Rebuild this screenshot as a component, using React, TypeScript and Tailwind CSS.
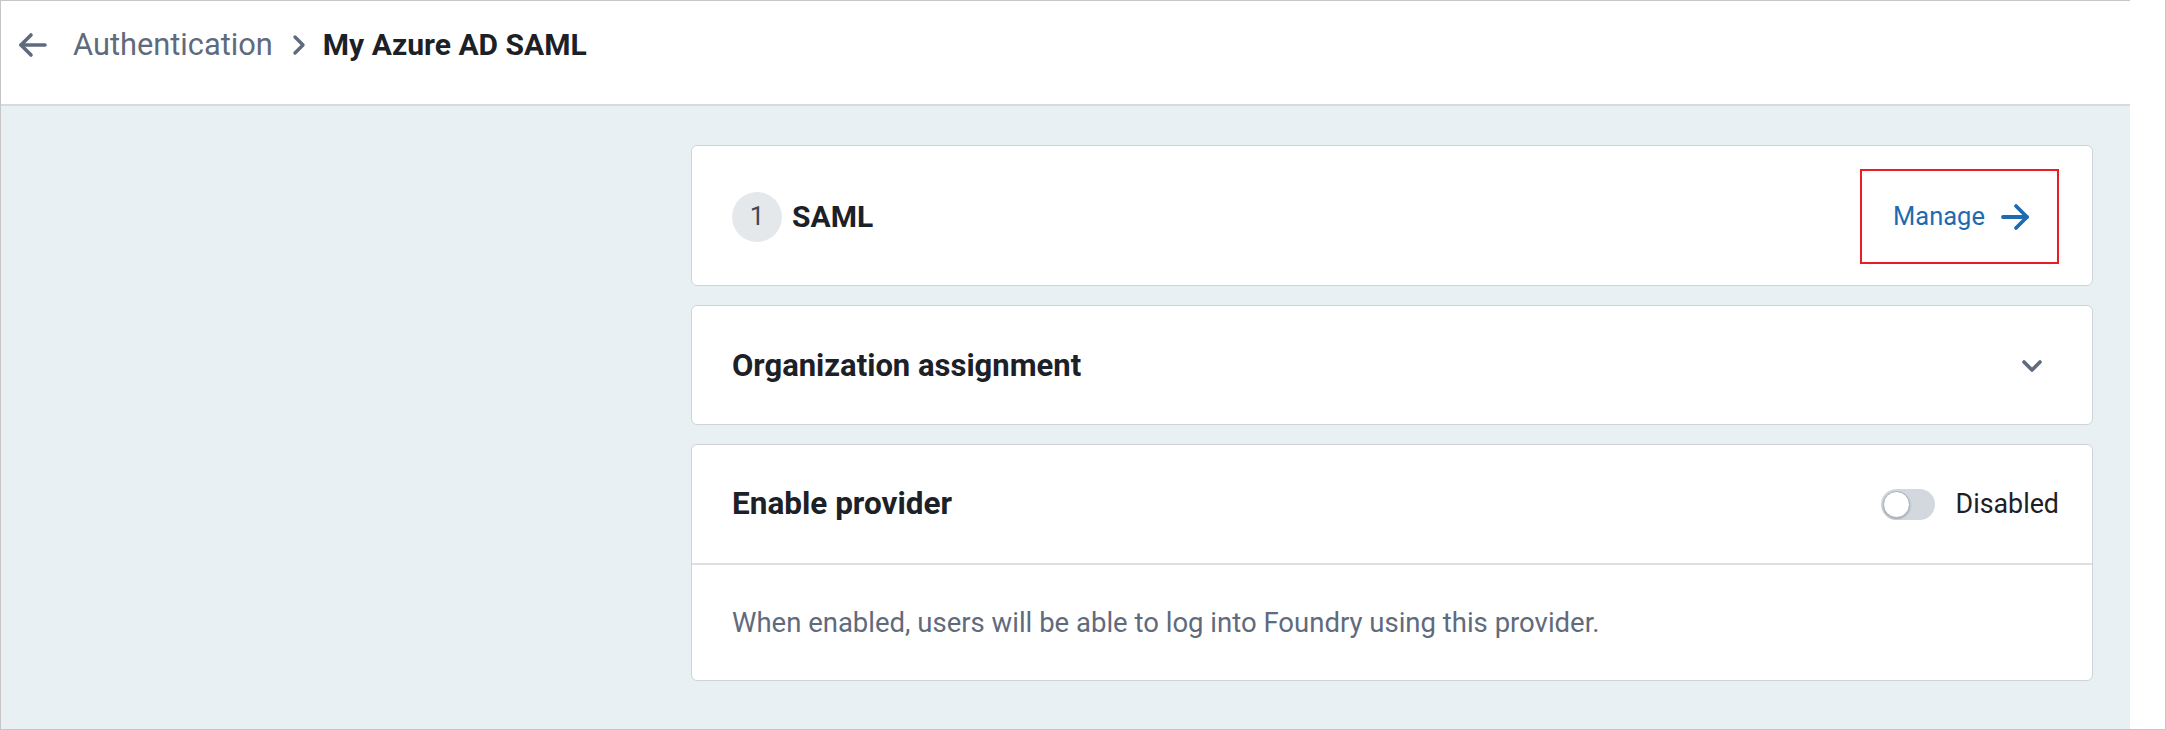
import React from "react";

function ArrowLeft() {
  return (
    <svg width="30" height="26" viewBox="0 0 30 26" fill="none" stroke="#5f6b7c" strokeWidth="3.6" strokeLinecap="round" strokeLinejoin="round">
      <path d="M27 13H3" />
      <path d="M13 3L3 13l10 10" />
    </svg>
  );
}

function ChevronRight() {
  return (
    <svg width="14" height="22" viewBox="0 0 14 22" fill="none" stroke="#5f6b7c" strokeWidth="3.4" strokeLinecap="round" strokeLinejoin="round">
      <path d="M3 3l8 8-8 8" />
    </svg>
  );
}

function ArrowRight() {
  return (
    <svg width="30" height="28" viewBox="0 0 30 28" fill="none" stroke="#1f6bb0" strokeWidth="3.8" strokeLinecap="round" strokeLinejoin="round">
      <path d="M3 14h24" />
      <path d="M16 3l11 11-11 11" />
    </svg>
  );
}

function ChevronDown() {
  return (
    <svg width="22" height="14" viewBox="0 0 22 14" fill="none" stroke="#5f6b7c" strokeWidth="3.6" strokeLinecap="round" strokeLinejoin="round">
      <path d="M3 3l8 8 8-8" />
    </svg>
  );
}

export default function App() {
  return (
    <div
      className="w-[2166px] h-[730px] flex bg-white border-l border-r border-b border-[#c6c6c6] overflow-hidden"
      style={{ fontFamily: "Roboto, 'Noto Sans', sans-serif" }}
    >
      <div className="w-[2129px] flex flex-col border-t border-[#c6c6c6]">
        <header className="h-[105px] shrink-0 flex items-start pt-[28px] pl-[17px] border-b-2 border-[#d5dadf] bg-white">
          <div className="h-[32px] flex items-center">
            <ArrowLeft />
            <span className="ml-[25px] text-[30.8px] text-[#5f6b7c] leading-none">Authentication</span>
            <span className="ml-[19px] flex items-center">
              <ChevronRight />
            </span>
            <span className="ml-[17px] text-[30px] font-bold text-[#1c2127] leading-none">My Azure AD SAML</span>
          </div>
        </header>
        <main className="flex-1 bg-[#e9f0f3] pt-[39px] pl-[690px] pr-[37px] flex flex-col gap-[19px]">
          <section className="h-[141px] bg-white border border-[#cdd3d9] rounded-[6px] flex items-center justify-between pl-[40px] pr-[33px] pt-[2px]">
            <div className="flex items-center">
              <div className="w-[50px] h-[50px] rounded-full bg-[#e5e8eb] flex items-center justify-center text-[26px] text-[#404854]">1</div>
              <span className="ml-[10px] text-[30px] font-bold text-[#1c2127]">SAML</span>
            </div>
            <div className="w-[199px] h-[95px] border-2 border-[#ec1c24] flex items-center pl-[31px]">
              <span className="text-[25.5px] text-[#1f6bb0]">Manage</span>
              <span className="ml-[15px] flex items-center">
                <ArrowRight />
              </span>
            </div>
          </section>
          <section className="h-[120px] bg-white border border-[#cdd3d9] rounded-[6px] flex items-center justify-between pl-[40px] pr-[49px] pt-[2px]">
            <span className="text-[31px] font-bold text-[#1c2127]">Organization assignment</span>
            <ChevronDown />
          </section>
          <section className="h-[237px] bg-white border border-[#cdd3d9] rounded-[6px] flex flex-col">
            <div className="h-[120px] flex items-center justify-between pl-[40px] pr-[33px] border-b-2 border-[#dde1e5]">
              <span className="text-[31.5px] font-bold text-[#1c2127]">Enable provider</span>
              <div className="flex items-center">
                <div className="w-[54px] h-[31px] rounded-full bg-[#d3d8de] flex items-center pl-[2px]">
                  <div className="w-[27px] h-[27px] rounded-full bg-white border border-[#a7b0ba] shadow-[0_1px_2px_rgba(17,20,24,0.25)]" />
                </div>
                <span className="ml-[21px] text-[26.8px] text-[#1c2127]">Disabled</span>
              </div>
            </div>
            <div className="flex-1 flex items-center pl-[40px]">
              <span className="text-[27.5px] text-[#5f6b7c]">When enabled, users will be able to log into Foundry using this provider.</span>
            </div>
          </section>
        </main>
      </div>
      <div className="flex-1 bg-white" />
    </div>
  );
}
